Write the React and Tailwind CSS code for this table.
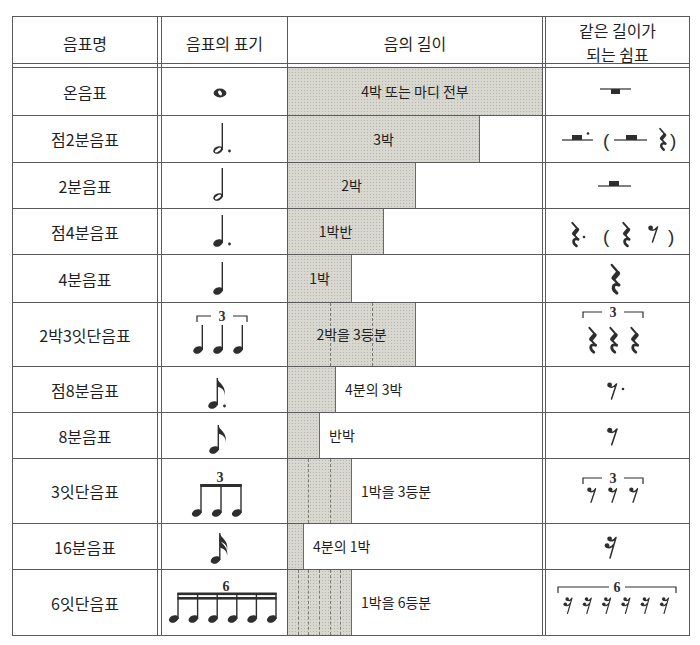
import React from 'react';

const INK = '#2e2e2e';

// cell origins (page coordinates) so the notation can be drawn in page coords
const COL2 = 162;
const COL4 = 546;

function Head({ x, y, open }) {
  return (
    <g transform={`rotate(-24 ${x} ${y})`}>
      <ellipse cx={x} cy={y} rx={5} ry={3.5} fill={INK} />
      {open && <ellipse cx={x} cy={y} rx={3.6} ry={1.4} fill="#fff" transform={`rotate(-10 ${x} ${y})`} />}
    </g>
  );
}

function Flag({ sx, t }) {
  return (
    <path
      d={`M${sx} ${t} C${sx + 0.5} ${t + 5} ${sx + 10} ${t + 7} ${sx + 7} ${t + 19} C${sx + 8.5} ${t + 11} ${sx + 3} ${t + 9.5} ${sx} ${t + 8.5} Z`}
      fill={INK}
    />
  );
}

function Note({ x, y, top, open, dot, flags = 0 }) {
  const sx = x + 4.3;
  return (
    <g>
      <Head x={x} y={y} open={open} />
      <rect x={sx - 0.7} y={top} width={1.4} height={y - top} fill={INK} />
      {Array.from({ length: flags }).map((_, i) => (
        <Flag key={i} sx={sx} t={top + i * 6} />
      ))}
      {dot && <circle cx={x + 11.5} cy={y + 1} r={1.4} fill={INK} />}
    </g>
  );
}

function Num({ x, y, n }) {
  return (
    <text x={x} y={y} textAnchor="middle" fontSize="14" fontWeight="bold" fontFamily="'Liberation Serif', serif" fill={INK}>
      {n}
    </text>
  );
}

function Bracket({ x1, x2, y, n, gap = 11, tick = 6 }) {
  const c = (x1 + x2) / 2;
  return (
    <g>
      <path d={`M${x1} ${y + tick} V${y} H${c - gap} M${c + gap} ${y} H${x2} V${y + tick}`} stroke={INK} strokeWidth="1.2" fill="none" />
      <Num x={c} y={y + 5} n={n} />
    </g>
  );
}

function QRest({ x, y, s = 1 }) {
  return (
    <g transform={`translate(${x} ${y}) scale(${s})`} stroke={INK} fill="none" strokeLinecap="round" strokeLinejoin="round">
      <path d="M2.4 0.8 L8.2 7.6 L3.8 12.8 L8.6 18.2" strokeWidth="2" />
      <path d="M7.6 8.2 L4.2 12.2" strokeWidth="4.2" />
      <path d="M8.6 18.2 C2.8 16.3 2.2 22 6.8 25.2" strokeWidth="2.8" />
    </g>
  );
}

function ERest({ x, y, s = 1 }) {
  return (
    <g transform={`translate(${x} ${y}) scale(${s})`}>
      <circle cx="2.6" cy="3" r="2.4" fill={INK} />
      <path d="M2.6 4.6 Q6 6.6 9.5 2 M9.5 2 L4.5 17" stroke={INK} strokeWidth="1.5" fill="none" strokeLinecap="round" />
    </g>
  );
}

function SRest({ x, y, s = 1 }) {
  return (
    <g transform={`translate(${x} ${y}) scale(${s})`}>
      <circle cx="5.6" cy="2.8" r="2.4" fill={INK} />
      <circle cx="3" cy="9.6" r="2.4" fill={INK} />
      <path d="M5.6 4.4 Q9 6 12 1.5 M3 11.2 Q6.6 12.8 10 8.2 M12 1.5 L6 22" stroke={INK} strokeWidth="1.5" fill="none" strokeLinecap="round" />
    </g>
  );
}

function LineRest({ x1, x2, r1, r2, y, below }) {
  return (
    <g fill={INK}>
      <rect x={x1} y={y - 0.6} width={x2 - x1} height={1.2} />
      <rect x={r1} y={below ? y : y - 5} width={r2 - r1} height={5} />
    </g>
  );
}

function Paren({ x, y, c }) {
  return (
    <text x={x} y={y} fontSize="19" fontFamily="'Liberation Sans', sans-serif" fill={INK}>
      {c}
    </text>
  );
}

function Staff({ ox, oy, w, h, children }) {
  return (
    <svg width={w} height={h} viewBox={`${ox} ${oy} ${w} ${h}`} className="block">
      {children}
    </svg>
  );
}

const sixStems = [0, 1, 2, 3, 4, 5].map((i) => 178 + i * 19.6);

const rows = [
  {
    name: '온음표',
    h: 48,
    top: 68,
    bar: { beats: 4, label: '4박 또는 마디 전부', inside: true },
    note: (
      <g>
        <ellipse cx={220} cy={93} rx={6.4} ry={4.4} fill={INK} />
        <ellipse cx={220} cy={93} rx={1.6} ry={2.6} fill="#fff" transform="rotate(-35 220 93)" />
      </g>
    ),
    rest: <LineRest x1={600} x2={631} r1={611} r2={620} y={89} below />,
  },
  {
    name: '점2분음표',
    h: 47,
    top: 116,
    bar: { beats: 3, label: '3박', inside: true },
    note: <Note x={218} y={150} top={123} open dot />,
    rest: (
      <g>
        <LineRest x1={562} x2={593} r1={572} r2={582} y={140} />
        <circle cx={588} cy={133.5} r={1.3} fill={INK} />
        <Paren x={603} y={147} c="(" />
        <LineRest x1={614} x2={647} r1={626} r2={637} y={140} />
        <QRest x={658} y={128} s={0.86} />
        <Paren x={670} y={147} c=")" />
      </g>
    ),
  },
  {
    name: '2분음표',
    h: 46,
    top: 163,
    bar: { beats: 2, label: '2박', inside: true },
    note: <Note x={218} y={197} top={168} open />,
    rest: <LineRest x1={598} x2={631} r1={609} r2={619} y={186} />,
  },
  {
    name: '점4분음표',
    h: 46,
    top: 209,
    bar: { beats: 1.5, label: '1박반', inside: true },
    note: <Note x={218} y={243} top={215} dot />,
    rest: (
      <g>
        <QRest x={570} y={222} s={0.95} />
        <circle cx={584} cy={237} r={1.3} fill={INK} />
        <Paren x={603} y={243} c="(" />
        <QRest x={621} y={222} s={0.95} />
        <ERest x={648} y={225} />
        <Paren x={668} y={243} c=")" />
      </g>
    ),
  },
  {
    name: '4분음표',
    h: 46,
    top: 255,
    bar: { beats: 1, label: '1박', inside: true },
    note: <Note x={218} y={291} top={262} />,
    rest: <QRest x={609} y={264} s={1.15} />,
  },
  {
    name: '2박3잇단음표',
    h: 64,
    top: 303,
    bar: { beats: 2, div: 3, label: '2박을 3등분', inside: true },
    note: (
      <g>
        <Bracket x1={197} x2={247} y={316} n="3" />
        <Note x={198} y={350} top={325} />
        <Note x={218} y={350} top={325} />
        <Note x={238} y={350} top={325} />
      </g>
    ),
    rest: (
      <g>
        <Bracket x1={583} x2={643} y={312} n="3" />
        <QRest x={587} y={327} />
        <QRest x={608} y={327} />
        <QRest x={629} y={327} />
      </g>
    ),
  },
  {
    name: '점8분음표',
    h: 46,
    top: 367,
    bar: { beats: 0.75, label: '4분의 3박', inside: false },
    note: <Note x={213} y={405} top={378} flags={1} dot />,
    rest: (
      <g>
        <ERest x={607} y={382} />
        <circle cx={623} cy={389} r={1.3} fill={INK} />
      </g>
    ),
  },
  {
    name: '8분음표',
    h: 46,
    top: 413,
    bar: { beats: 0.5, label: '반박', inside: false },
    note: <Note x={214} y={450} top={425} flags={1} />,
    rest: <ERest x={607} y={427} s={1.05} />,
  },
  {
    name: '3잇단음표',
    h: 65,
    top: 459,
    bar: { beats: 1, div: 3, label: '1박을 3등분', inside: false },
    note: (
      <g>
        <Num x={220} y={482} n="3" />
        <rect x={200.4} y={484} width={41.2} height={3} fill={INK} />
        <Note x={196.7} y={513} top={484} />
        <Note x={216.7} y={513} top={484} />
        <Note x={236.7} y={513} top={484} />
      </g>
    ),
    rest: (
      <g>
        <Bracket x1={583} x2={643} y={478} n="3" />
        <ERest x={587} y={487} s={0.9} />
        <ERest x={608} y={487} s={0.9} />
        <ERest x={629} y={487} s={0.9} />
      </g>
    ),
  },
  {
    name: '16분음표',
    h: 46,
    top: 524,
    bar: { beats: 0.25, label: '4분의 1박', inside: false },
    note: <Note x={215.5} y={560} top={533} flags={2} />,
    rest: <SRest x={604} y={536} />,
  },
  {
    name: '6잇단음표',
    h: 66,
    top: 570,
    bar: { beats: 1, div: 6, label: '1박을 6등분', inside: false },
    note: (
      <g>
        <Num x={226} y={591} n="6" />
        <rect x={177.4} y={592.5} width={99.2} height={2.6} fill={INK} />
        <rect x={177.4} y={597} width={99.2} height={2.6} fill={INK} />
        {sixStems.map((s) => (
          <Note key={s} x={s - 4.3} y={619} top={593} />
        ))}
      </g>
    ),
    rest: (
      <g>
        <Bracket x1={558} x2={676} y={587} n="6" gap={8} />
        {[0, 1, 2, 3, 4, 5].map((i) => (
          <SRest key={i} x={563 + i * 19.3} y={597} s={0.75} />
        ))}
      </g>
    ),
  },
];

function Duration({ beats, div = 1, label, inside }) {
  const full = beats >= 4;
  return (
    <div className="flex h-full">
      <div
        className={`grid bg-[#d8d8d0] bg-[radial-gradient(circle,#b5b5ab_0.7px,transparent_1px)] bg-[length:3px_3px] ${
          full ? 'flex-1' : 'border-r border-[#6a6a6a]'
        }`}
        style={full ? undefined : { width: beats * 64 }}
      >
        <div className="col-start-1 row-start-1 flex">
          {Array.from({ length: div }).map((_, i) => (
            <div key={i} className={`flex-1 ${i < div - 1 ? 'border-r border-dashed border-[#7a7a7a]' : ''}`} />
          ))}
        </div>
        {inside && (
          <span className="col-start-1 row-start-1 self-center whitespace-nowrap text-center text-[14px]">{label}</span>
        )}
      </div>
      {!inside && <span className="ml-[9px] self-center whitespace-nowrap text-[14px]">{label}</span>}
    </div>
  );
}

const cell = 'border-r border-b border-[#5a5a5a]';

export default function App() {
  return (
    <div className="min-h-[645px] bg-white pt-4 pl-3 font-['Noto_Sans_CJK_KR','Noto_Sans',sans-serif] text-[#1f1f1f]">
      <div className="grid w-[678px] grid-cols-[145px_4px_126px_255px_3px_144px] grid-rows-[47px_4px_48px_47px_46px_46px_48px_64px_46px_46px_65px_46px_66px] border-t border-l border-[#5a5a5a]">
        {/* header */}
        <div className={`${cell} flex items-center justify-center pt-[5px] text-[16px]`}>음표명</div>
        <div className={cell} />
        <div className={`${cell} flex items-center justify-center pt-[5px] text-[16px]`}>음표의 표기</div>
        <div className={`${cell} flex items-center justify-center pt-[5px] text-[16px]`}>음의 길이</div>
        <div className={cell} />
        <div className={`${cell} flex flex-col items-center justify-center pt-[4px] text-[16px] leading-[24px]`}>
          <span>같은 길이가</span>
          <span>되는 쉼표</span>
        </div>

        {/* double line under the header */}
        {[0, 1, 2, 3, 4, 5].map((i) => (
          <div key={i} className={cell} />
        ))}

        {rows.map((r) => (
          <React.Fragment key={r.name}>
            <div className={`${cell} flex items-center justify-center text-[16px]`}>{r.name}</div>
            <div className={cell} />
            <div className={cell}>
              <Staff ox={COL2} oy={r.top} w={125} h={r.h - 1}>
                {r.note}
              </Staff>
            </div>
            <div className={cell}>
              <Duration {...r.bar} />
            </div>
            <div className={cell} />
            <div className={cell}>
              <Staff ox={COL4} oy={r.top} w={143} h={r.h - 1}>
                {r.rest}
              </Staff>
            </div>
          </React.Fragment>
        ))}
      </div>
    </div>
  );
}
